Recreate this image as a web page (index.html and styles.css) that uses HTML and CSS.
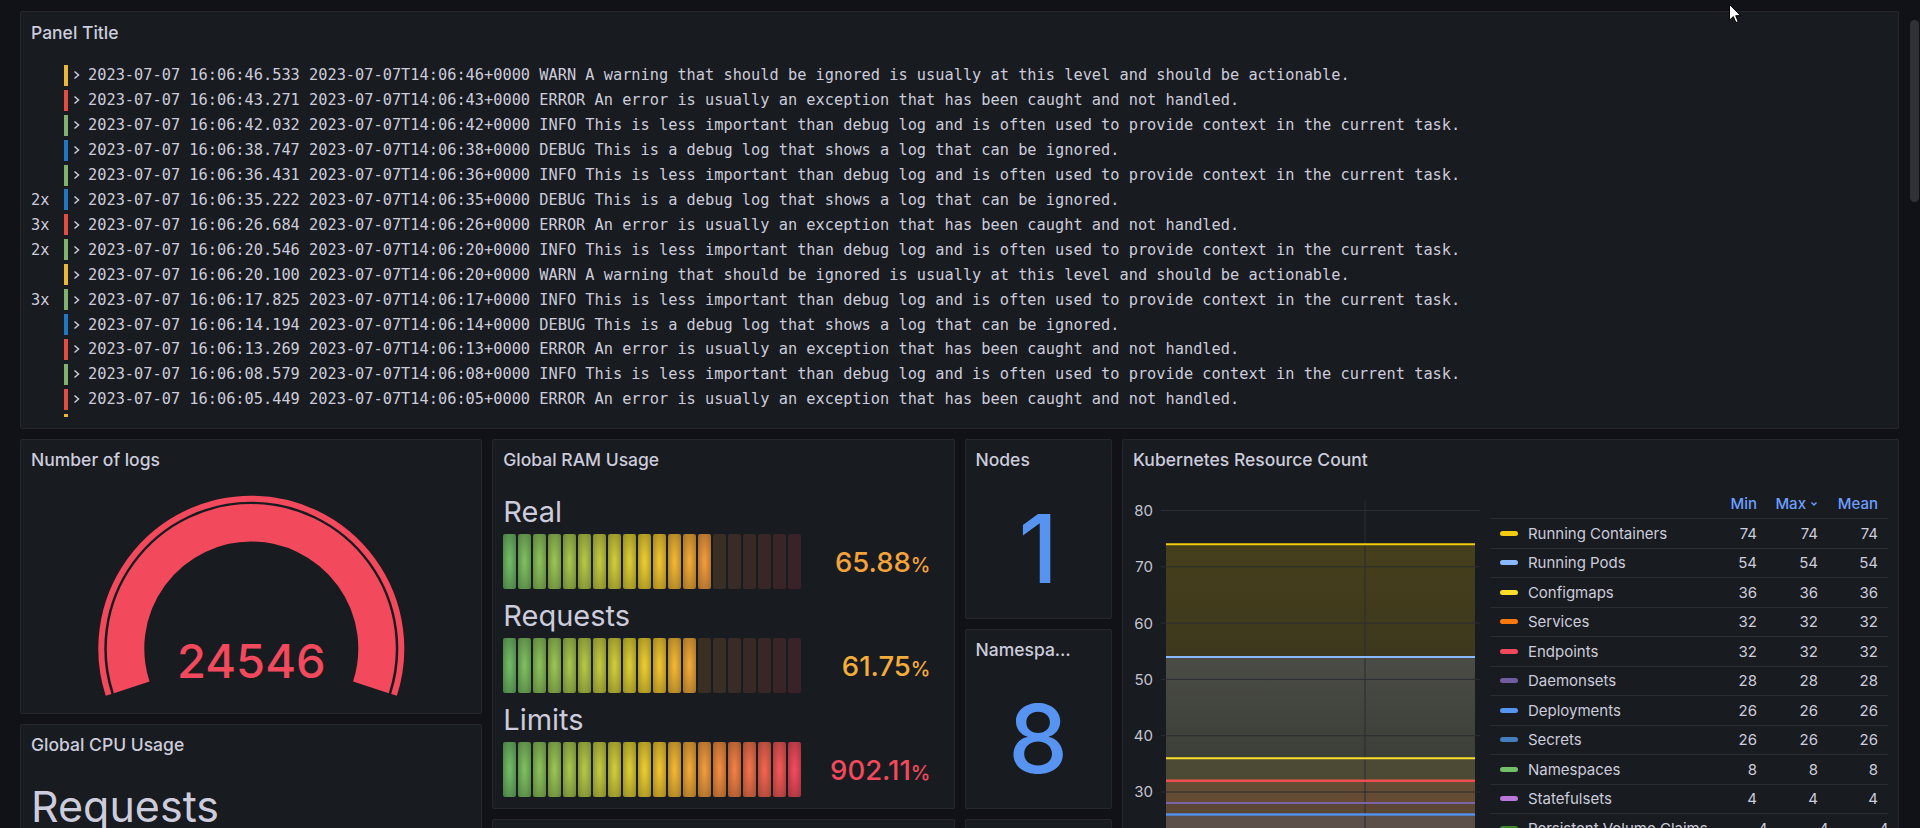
FILE: index.html
```html
<!DOCTYPE html>
<html lang="en">
<head>
<meta charset="utf-8">
<title>Dashboard</title>
<link rel="stylesheet" href="styles.css">
</head>
<body>
<div class="dashboard">

  <section class="panel p-logs">
    <header class="panel-header"><h2 class="panel-title">Panel Title</h2></header>
    <div class="panel-body logs-body">
      <div class="log-list">
        <div class="log-row"><span class="dup"></span><span class="lvl warn"></span><svg class="chev" viewBox="0 0 7 10"><polyline points="1.5,1.5 5.5,5 1.5,8.5"/></svg><span class="msg">2023-07-07 16:06:46.533 2023-07-07T14:06:46+0000 WARN A warning that should be ignored is usually at this level and should be actionable.</span></div>
        <div class="log-row"><span class="dup"></span><span class="lvl error"></span><svg class="chev" viewBox="0 0 7 10"><polyline points="1.5,1.5 5.5,5 1.5,8.5"/></svg><span class="msg">2023-07-07 16:06:43.271 2023-07-07T14:06:43+0000 ERROR An error is usually an exception that has been caught and not handled.</span></div>
        <div class="log-row"><span class="dup"></span><span class="lvl info"></span><svg class="chev" viewBox="0 0 7 10"><polyline points="1.5,1.5 5.5,5 1.5,8.5"/></svg><span class="msg">2023-07-07 16:06:42.032 2023-07-07T14:06:42+0000 INFO This is less important than debug log and is often used to provide context in the current task.</span></div>
        <div class="log-row"><span class="dup"></span><span class="lvl debug"></span><svg class="chev" viewBox="0 0 7 10"><polyline points="1.5,1.5 5.5,5 1.5,8.5"/></svg><span class="msg">2023-07-07 16:06:38.747 2023-07-07T14:06:38+0000 DEBUG This is a debug log that shows a log that can be ignored.</span></div>
        <div class="log-row"><span class="dup"></span><span class="lvl info"></span><svg class="chev" viewBox="0 0 7 10"><polyline points="1.5,1.5 5.5,5 1.5,8.5"/></svg><span class="msg">2023-07-07 16:06:36.431 2023-07-07T14:06:36+0000 INFO This is less important than debug log and is often used to provide context in the current task.</span></div>
        <div class="log-row"><span class="dup">2x</span><span class="lvl debug"></span><svg class="chev" viewBox="0 0 7 10"><polyline points="1.5,1.5 5.5,5 1.5,8.5"/></svg><span class="msg">2023-07-07 16:06:35.222 2023-07-07T14:06:35+0000 DEBUG This is a debug log that shows a log that can be ignored.</span></div>
        <div class="log-row"><span class="dup">3x</span><span class="lvl error"></span><svg class="chev" viewBox="0 0 7 10"><polyline points="1.5,1.5 5.5,5 1.5,8.5"/></svg><span class="msg">2023-07-07 16:06:26.684 2023-07-07T14:06:26+0000 ERROR An error is usually an exception that has been caught and not handled.</span></div>
        <div class="log-row"><span class="dup">2x</span><span class="lvl info"></span><svg class="chev" viewBox="0 0 7 10"><polyline points="1.5,1.5 5.5,5 1.5,8.5"/></svg><span class="msg">2023-07-07 16:06:20.546 2023-07-07T14:06:20+0000 INFO This is less important than debug log and is often used to provide context in the current task.</span></div>
        <div class="log-row"><span class="dup"></span><span class="lvl warn"></span><svg class="chev" viewBox="0 0 7 10"><polyline points="1.5,1.5 5.5,5 1.5,8.5"/></svg><span class="msg">2023-07-07 16:06:20.100 2023-07-07T14:06:20+0000 WARN A warning that should be ignored is usually at this level and should be actionable.</span></div>
        <div class="log-row"><span class="dup">3x</span><span class="lvl info"></span><svg class="chev" viewBox="0 0 7 10"><polyline points="1.5,1.5 5.5,5 1.5,8.5"/></svg><span class="msg">2023-07-07 16:06:17.825 2023-07-07T14:06:17+0000 INFO This is less important than debug log and is often used to provide context in the current task.</span></div>
        <div class="log-row"><span class="dup"></span><span class="lvl debug"></span><svg class="chev" viewBox="0 0 7 10"><polyline points="1.5,1.5 5.5,5 1.5,8.5"/></svg><span class="msg">2023-07-07 16:06:14.194 2023-07-07T14:06:14+0000 DEBUG This is a debug log that shows a log that can be ignored.</span></div>
        <div class="log-row"><span class="dup"></span><span class="lvl error"></span><svg class="chev" viewBox="0 0 7 10"><polyline points="1.5,1.5 5.5,5 1.5,8.5"/></svg><span class="msg">2023-07-07 16:06:13.269 2023-07-07T14:06:13+0000 ERROR An error is usually an exception that has been caught and not handled.</span></div>
        <div class="log-row"><span class="dup"></span><span class="lvl info"></span><svg class="chev" viewBox="0 0 7 10"><polyline points="1.5,1.5 5.5,5 1.5,8.5"/></svg><span class="msg">2023-07-07 16:06:08.579 2023-07-07T14:06:08+0000 INFO This is less important than debug log and is often used to provide context in the current task.</span></div>
        <div class="log-row"><span class="dup"></span><span class="lvl error"></span><svg class="chev" viewBox="0 0 7 10"><polyline points="1.5,1.5 5.5,5 1.5,8.5"/></svg><span class="msg">2023-07-07 16:06:05.449 2023-07-07T14:06:05+0000 ERROR An error is usually an exception that has been caught and not handled.</span></div>
        <div class="log-row"><span class="dup"></span><span class="lvl warn"></span><svg class="chev" viewBox="0 0 7 10"><polyline points="1.5,1.5 5.5,5 1.5,8.5"/></svg><span class="msg">2023-07-07 16:06:03.017 2023-07-07T14:06:03+0000 WARN A warning that should be ignored is usually at this level and should be actionable.</span></div>
      </div>
    </div>
  </section>

  <section class="panel p-gauge">
    <header class="panel-header"><h2 class="panel-title">Number of logs</h2></header>
    <div class="panel-body">
      <svg class="gauge" viewBox="0 0 441 213">
        <path class="gauge-ring" d="M77.6 204.9 A150 150 0 1 1 363.0 204.9"/>
        <path class="gauge-band" d="M100.7 197.4 A125.75 125.75 0 1 1 339.9 197.4"/>
        <text class="gauge-value" x="220.3" y="187.5">24546</text>
      </svg>
    </div>
  </section>

  <section class="panel p-cpu">
    <header class="panel-header"><h2 class="panel-title">Global CPU Usage</h2></header>
    <div class="panel-body">
      <div class="cpu-label">Requests</div>
    </div>
  </section>

  <section class="panel p-ram">
    <header class="panel-header"><h2 class="panel-title">Global RAM Usage</h2></header>
    <div class="panel-body bars">
      <div class="bar-item">
        <div class="bar-label">Real</div>
        <div class="bar-row">
          <div class="cells">
            <span class="cell"></span><span class="cell"></span><span class="cell"></span><span class="cell"></span><span class="cell"></span>
            <span class="cell"></span><span class="cell"></span><span class="cell"></span><span class="cell"></span><span class="cell"></span>
            <span class="cell"></span><span class="cell"></span><span class="cell"></span><span class="cell"></span><span class="cell off"></span>
            <span class="cell off"></span><span class="cell off"></span><span class="cell off"></span><span class="cell off"></span><span class="cell off"></span>
          </div>
          <div class="bar-value v-real">65.88<span class="unit">%</span></div>
        </div>
      </div>
      <div class="bar-item">
        <div class="bar-label">Requests</div>
        <div class="bar-row">
          <div class="cells">
            <span class="cell"></span><span class="cell"></span><span class="cell"></span><span class="cell"></span><span class="cell"></span>
            <span class="cell"></span><span class="cell"></span><span class="cell"></span><span class="cell"></span><span class="cell"></span>
            <span class="cell"></span><span class="cell"></span><span class="cell"></span><span class="cell off"></span><span class="cell off"></span>
            <span class="cell off"></span><span class="cell off"></span><span class="cell off"></span><span class="cell off"></span><span class="cell off"></span>
          </div>
          <div class="bar-value v-req">61.75<span class="unit">%</span></div>
        </div>
      </div>
      <div class="bar-item">
        <div class="bar-label">Limits</div>
        <div class="bar-row">
          <div class="cells">
            <span class="cell"></span><span class="cell"></span><span class="cell"></span><span class="cell"></span><span class="cell"></span>
            <span class="cell"></span><span class="cell"></span><span class="cell"></span><span class="cell"></span><span class="cell"></span>
            <span class="cell"></span><span class="cell"></span><span class="cell"></span><span class="cell"></span><span class="cell"></span>
            <span class="cell"></span><span class="cell"></span><span class="cell"></span><span class="cell"></span><span class="cell"></span>
          </div>
          <div class="bar-value v-lim">902.11<span class="unit">%</span></div>
        </div>
      </div>
    </div>
  </section>

  <section class="panel p-ram2"></section>

  <section class="panel p-nodes">
    <header class="panel-header"><h2 class="panel-title">Nodes</h2></header>
    <div class="panel-body stat-body"><span class="stat-value">1</span></div>
  </section>

  <section class="panel p-ns">
    <header class="panel-header"><h2 class="panel-title narrow">Namespaces</h2></header>
    <div class="panel-body stat-body"><span class="stat-value">8</span></div>
  </section>

  <section class="panel p-small"></section>

  <section class="panel p-k8s">
    <header class="panel-header"><h2 class="panel-title">Kubernetes Resource Count</h2></header>
    <div class="panel-body k8s-body">
      <svg class="chart" viewBox="0 0 357 360">
        <defs>
          <linearGradient id="g1" x1="0" y1="0" x2="0" y2="1"><stop offset="0" stop-color="#463f1c"/><stop offset="1" stop-color="#3d381d"/></linearGradient>
          <linearGradient id="g2" x1="0" y1="0" x2="0" y2="1"><stop offset="0" stop-color="#4a4c45"/><stop offset="1" stop-color="#3c3e38"/></linearGradient>
        </defs>
        <g class="axis">
          <text x="20" y="25.9">80</text>
          <text x="20" y="82.2">70</text>
          <text x="20" y="138.5">60</text>
          <text x="20" y="194.8">50</text>
          <text x="20" y="251.1">40</text>
          <text x="20" y="307.4">30</text>
          <text x="20" y="363.7">20</text>
        </g>
        <rect x="33" y="54.3" width="309" height="112.6" fill="url(#g1)"/>
        <rect x="33" y="166.9" width="309" height="101.3" fill="url(#g2)"/>
        <rect x="33" y="268.2" width="309" height="22.5" fill="#4c4a34"/>
        <rect x="33" y="290.7" width="309" height="22.4" fill="#654b33"/>
        <rect x="33" y="313.1" width="309" height="11.4" fill="#5b4636"/>
        <rect x="33" y="324.5" width="309" height="40" fill="#5c4f4a"/>
        <g class="grid">
          <line x1="28" y1="20.5" x2="347" y2="20.5"/>
          <line x1="28" y1="76.8" x2="347" y2="76.8"/>
          <line x1="28" y1="133.1" x2="347" y2="133.1"/>
          <line x1="28" y1="189.4" x2="347" y2="189.4"/>
          <line x1="28" y1="245.7" x2="347" y2="245.7"/>
          <line x1="28" y1="302" x2="347" y2="302"/>
          <line x1="232" y1="10.5" x2="232" y2="360"/>
        </g>
        <g class="series">
          <line x1="33" y1="54.3" x2="342" y2="54.3" stroke="#F2CC0C"/>
          <line x1="33" y1="166.9" x2="342" y2="166.9" stroke="#8AB8FF"/>
          <line x1="33" y1="268.2" x2="342" y2="268.2" stroke="#FADE2A"/>
          <line x1="33" y1="290.7" x2="342" y2="290.7" stroke="#FF780A"/>
          <line x1="33" y1="290.7" x2="342" y2="290.7" stroke="#F2495C"/>
          <line x1="33" y1="313.1" x2="342" y2="313.1" stroke="#7B64A8"/>
          <line x1="33" y1="324.5" x2="342" y2="324.5" stroke="#447EBC"/>
          <line x1="33" y1="324.5" x2="342" y2="324.5" stroke="#5794F2"/>
        </g>
      </svg>
      <div class="legend">
        <div class="lg-row lg-head"><span></span><span>Min</span><span class="sort">Max<svg viewBox="0 0 8 8"><polyline points="1.5,2.5 4,5 6.5,2.5"/></svg></span><span>Mean</span></div>
        <div class="lg-row"><span class="lg-name"><i class="sw c-yellow"></i>Running Containers</span><span>74</span><span>74</span><span>74</span></div>
        <div class="lg-row"><span class="lg-name"><i class="sw c-lightblue"></i>Running Pods</span><span>54</span><span>54</span><span>54</span></div>
        <div class="lg-row"><span class="lg-name"><i class="sw c-lightyellow"></i>Configmaps</span><span>36</span><span>36</span><span>36</span></div>
        <div class="lg-row"><span class="lg-name"><i class="sw c-orange"></i>Services</span><span>32</span><span>32</span><span>32</span></div>
        <div class="lg-row"><span class="lg-name"><i class="sw c-red"></i>Endpoints</span><span>32</span><span>32</span><span>32</span></div>
        <div class="lg-row"><span class="lg-name"><i class="sw c-purple"></i>Daemonsets</span><span>28</span><span>28</span><span>28</span></div>
        <div class="lg-row"><span class="lg-name"><i class="sw c-blue"></i>Deployments</span><span>26</span><span>26</span><span>26</span></div>
        <div class="lg-row"><span class="lg-name"><i class="sw c-steel"></i>Secrets</span><span>26</span><span>26</span><span>26</span></div>
        <div class="lg-row"><span class="lg-name"><i class="sw c-green"></i>Namespaces</span><span>8</span><span>8</span><span>8</span></div>
        <div class="lg-row"><span class="lg-name"><i class="sw c-violet"></i>Statefulsets</span><span>4</span><span>4</span><span>4</span></div>
        <div class="lg-row"><span class="lg-name"><i class="sw c-darkgreen"></i>Persistent Volume Claims</span><span>4</span><span>4</span><span>4</span></div>
      </div>
    </div>
  </section>

</div>

<div class="scrollbar"></div>
<svg class="cursor" viewBox="0 0 13 20"><path d="M0.5 0.5 L0.5 16.2 L4.3 12.6 L6.9 18.6 L9.2 17.6 L6.7 11.7 L11.6 11.7 Z"/></svg>
</body>
</html>
```

FILE: styles.css
```css
html, body {
  margin: 0;
  height: 100%;
  overflow: hidden;
  background: #111217;
}

body {
  font-family: Inter, "Noto Sans", sans-serif;
  color: #ccccdc;
}

.dashboard {
  display: grid;
  grid-template-columns: repeat(24, minmax(0, 1fr));
  grid-auto-rows: 37.5px;
  gap: 10px;
  padding: 11px 21px 0 20px;
}

.panel {
  background: #181b1f;
  border: 1px solid #25272c;
  border-radius: 2px;
  display: flex;
  flex-direction: column;
  overflow: hidden;
  min-width: 0;
}

.panel-header {
  height: 40px;
  flex: none;
  display: flex;
  align-items: center;
  padding: 0 10px;
}

.panel-title {
  margin: 0;
  font-size: 17.5px;
  font-weight: 500;
  color: #ccccdc;
  white-space: nowrap;
  overflow: hidden;
  text-overflow: ellipsis;
}

.panel-title.narrow {
  max-width: 96px;
}

.panel-body {
  flex: 1;
  min-height: 0;
  padding: 10px;
  position: relative;
}

.logs-body {
  padding: 11px 10px 10.5px;
}

/* grid placement */
.p-logs  { grid-column: 1 / span 24; grid-row: 1 / span 9; }
.p-gauge { grid-column: 1 / span 6;  grid-row: 10 / span 6; }
.p-cpu   { grid-column: 1 / span 6;  grid-row: 16 / span 8; }
.p-ram   { grid-column: 7 / span 6;  grid-row: 10 / span 8; }
.p-ram2  { grid-column: 7 / span 6;  grid-row: 18 / span 6; }
.p-nodes { grid-column: 13 / span 2; grid-row: 10 / span 4; }
.p-ns    { grid-column: 13 / span 2; grid-row: 14 / span 4; }
.p-small { grid-column: 13 / span 2; grid-row: 18 / span 6; }
.p-k8s   { grid-column: 15 / span 10; grid-row: 10 / span 14; }

/* logs */
.log-list {
  height: 100%;
  overflow: hidden;
}

.log-row {
  display: flex;
  align-items: center;
  height: 24.92px;
  font-family: "DejaVu Sans Mono", "Liberation Mono", monospace;
  font-size: 15.3px;
  white-space: pre;
  color: #ccccdc;
}

.dup {
  width: 33px;
  flex: none;
}

.lvl {
  width: 4px;
  height: 21px;
  flex: none;
  margin-right: 5px;
}

.lvl.warn  { background: #eab839; }
.lvl.error { background: #e24d42; }
.lvl.info  { background: #7eb26d; }
.lvl.debug { background: #1f78c1; }

.chev {
  width: 7px;
  height: 10px;
  flex: none;
  margin-right: 8px;
  fill: none;
  stroke: #ccccdc;
  stroke-width: 1.5;
}

/* gauge */
.gauge {
  display: block;
  width: 441px;
  height: 213px;
}

.gauge-ring {
  fill: none;
  stroke: #f2495c;
  stroke-width: 6;
}

.gauge-band {
  fill: none;
  stroke: #f2495c;
  stroke-width: 37.5;
}

.gauge-value {
  fill: #f2495c;
  font-family: Inter, sans-serif;
  font-size: 47px;
  font-weight: 500;
  text-anchor: middle;
}

/* cpu */
.cpu-label {
  font-size: 43px;
  line-height: 62px;
  color: #ccccdc;
}

/* bar gauge */
.bars {
  display: flex;
  flex-direction: column;
  gap: 4.5px;
}

.bar-label {
  font-size: 29px;
  line-height: 44.5px;
  height: 44.5px;
}

.bar-row {
  display: flex;
  align-items: center;
  height: 55px;
}

.cells {
  display: flex;
  gap: 2px;
  height: 100%;
  flex: none;
}

.cell {
  width: 13px;
  height: 100%;
  border-radius: 2px;
}

.cell:nth-child(1)  { background: radial-gradient(#6fb865 10%, #4a7c44); }
.cell:nth-child(2)  { background: radial-gradient(#7cbb5f 10%, #537f41); }
.cell:nth-child(3)  { background: radial-gradient(#8abd59 10%, #5c823d); }
.cell:nth-child(4)  { background: radial-gradient(#98c053 10%, #658439); }
.cell:nth-child(5)  { background: radial-gradient(#a5c24d 10%, #6e8535); }
.cell:nth-child(6)  { background: radial-gradient(#b2c447 10%, #778731); }
.cell:nth-child(7)  { background: radial-gradient(#bfc641 10%, #81882c); }
.cell:nth-child(8)  { background: radial-gradient(#cdc83b 10%, #8a8a28); }
.cell:nth-child(9)  { background: radial-gradient(#d9c935 10%, #938a24); }
.cell:nth-child(10) { background: radial-gradient(#e6c930 10%, #9c8a20); }
.cell:nth-child(11) { background: radial-gradient(#edc130 10%, #a08520); }
.cell:nth-child(12) { background: radial-gradient(#eeb434 10%, #a07b23); }
.cell:nth-child(13) { background: radial-gradient(#eea638 10%, #a07126); }
.cell:nth-child(14) { background: radial-gradient(#ee983c 10%, #a0682a); }
.cell:nth-child(15) { background: radial-gradient(#ee8b40 10%, #a05e2c); }
.cell:nth-child(16) { background: radial-gradient(#ee7e45 10%, #a0552f); }
.cell:nth-child(17) { background: radial-gradient(#ee714a 10%, #a04d33); }
.cell:nth-child(18) { background: radial-gradient(#ee644f 10%, #a04437); }
.cell:nth-child(19) { background: radial-gradient(#ee5755 10%, #a03b3a); }
.cell:nth-child(20) { background: radial-gradient(#ee4a5a 10%, #a0323e); }

.cell.off:nth-child(14) { background: #393023; }
.cell.off:nth-child(15) { background: #392e24; }
.cell.off:nth-child(16) { background: #392b25; }
.cell.off:nth-child(17) { background: #392926; }
.cell.off:nth-child(18) { background: #392727; }
.cell.off:nth-child(19) { background: #392427; }
.cell.off:nth-child(20) { background: #392228; }

.bar-value {
  flex: 1;
  text-align: right;
  padding-right: 13px;
  font-size: 27.5px;
  font-weight: 500;
  white-space: nowrap;
}

.bar-value .unit {
  font-size: 0.72em;
}

.v-real { color: #f4a33a; }
.v-req  { color: #f4ad3a; }
.v-lim  { color: #f2495c; }

/* stat */
.stat-body {
  display: flex;
  align-items: center;
  justify-content: center;
}

.stat-value {
  font-size: 95px;
  line-height: 1;
  font-weight: 500;
  color: #5794f2;
}

/* kubernetes */
.k8s-body {
  display: flex;
  overflow: hidden;
}

.chart {
  display: block;
  width: 357px;
  height: 360px;
  flex: none;
}

.axis text {
  fill: #c4c4d2;
  font-family: Inter, sans-serif;
  font-size: 15px;
  text-anchor: end;
}

.grid line {
  stroke: #2a2d33;
  stroke-width: 1;
}

.series line {
  stroke-width: 2;
}

.legend {
  flex: 1;
  min-width: 0;
  font-size: 15px;
}

.lg-row {
  display: grid;
  grid-template-columns: 1fr 60px 61px 60px;
  padding-right: 10px;
  height: 28.5px;
  align-items: center;
  border-bottom: 1px solid #2a2d32;
  color: #ccccdc;
  text-align: right;
}

.lg-head {
  color: #6e9fff;
  font-weight: 500;
}

.sort {
  display: inline-flex;
  align-items: center;
  justify-content: flex-end;
  gap: 4px;
}

.sort svg {
  width: 8px;
  height: 8px;
  fill: none;
  stroke: #6e9fff;
  stroke-width: 1.4;
}

.lg-name {
  display: flex;
  align-items: center;
  gap: 10px;
  padding-left: 10px;
  text-align: left;
  white-space: nowrap;
}

.sw {
  width: 18px;
  height: 5px;
  border-radius: 3px;
  flex: none;
}

.c-yellow      { background: #f2cc0c; }
.c-lightblue   { background: #8ab8ff; }
.c-lightyellow { background: #fade2a; }
.c-orange      { background: #ff780a; }
.c-red         { background: #f2495c; }
.c-purple      { background: #705da0; }
.c-blue        { background: #5794f2; }
.c-steel       { background: #447ebc; }
.c-green       { background: #73bf69; }
.c-violet      { background: #b877d9; }
.c-darkgreen   { background: #37872d; }

/* overlays */
.scrollbar {
  position: fixed;
  left: 1910px;
  top: 20px;
  width: 9px;
  height: 182px;
  border-radius: 5px;
  background: #2f3136;
}

.cursor {
  position: fixed;
  left: 1729px;
  top: 4px;
  width: 13px;
  height: 20px;
  fill: #ffffff;
  stroke: #000000;
  stroke-width: 1;
}
```
